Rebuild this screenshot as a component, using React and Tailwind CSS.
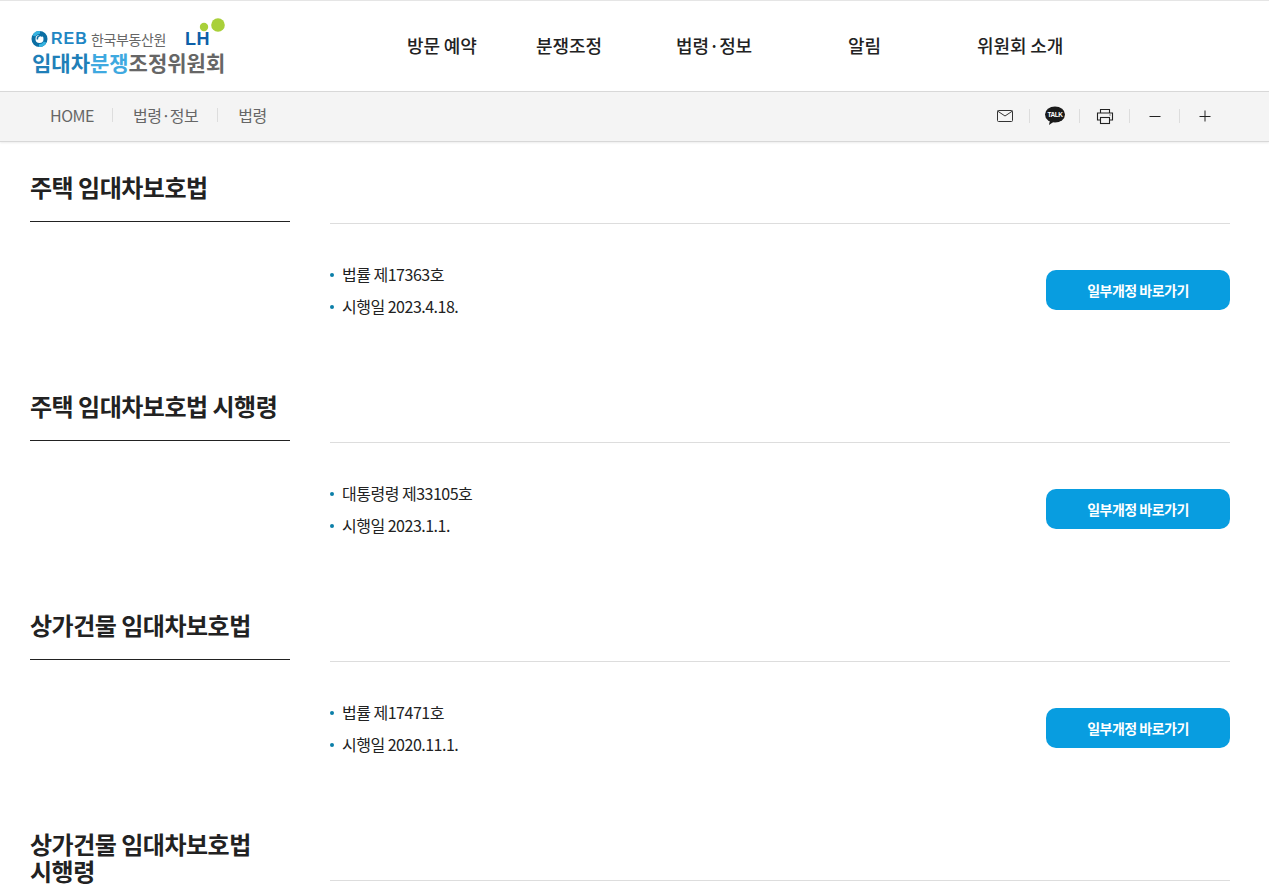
const FONT = "font-['Noto_Sans_CJK_KR','Noto_Sans',sans-serif]";

function Logo() {
  return (
    <div className="relative flex flex-col w-[194px] ml-[2px] mt-[13px]">
      <div className="flex items-center h-[18px] gap-[3px] -ml-[1px]">
        <svg width="17" height="18" viewBox="0 0 17 18" className="shrink-0">
          <circle cx="8.5" cy="9" r="6" fill="none" stroke="#0b6fa4" strokeWidth="4" />
          <path d="M3 6a6 6 0 0 1 6-3.5" fill="none" stroke="#35b3e0" strokeWidth="3" />
          <path d="M14 12a6 6 0 0 1-6 3.5" fill="none" stroke="#35b3e0" strokeWidth="3" />
          <path d="M6.5 9.5a3 3 0 0 1 5-3" fill="none" stroke="#0b6fa4" strokeWidth="1.5" />
        </svg>
        <span className="w-[37px] text-[16px] font-bold leading-[18px] tracking-[1px] text-[#1f87c4] font-['Liberation_Sans',sans-serif]">REB</span>
        <span className="text-[14px] leading-[18px] tracking-[-0.4px] text-[#666]">한국부동산원</span>
        <span className="ml-[16px] text-[18px] font-bold leading-[18px] tracking-[0.5px] text-[#0d5fa8] font-['Liberation_Sans',sans-serif]">LH</span>
      </div>
      <svg width="28" height="16" viewBox="0 0 28 16" className="absolute left-[166px] -top-[12px]">
        <circle cx="6" cy="9" r="4.2" fill="#a9d03a" />
        <circle cx="20" cy="7" r="6.8" fill="#a9d03a" />
      </svg>
      <div className="text-[21px] font-bold leading-[28px] whitespace-nowrap text-[#1f7fb8]">임대차<span className="text-[#3fa9e0]">분쟁</span><span className="text-[#666]">조정위원회</span></div>
    </div>
  );
}

function Section({ title, lines }) {
  return (
    <section className="flex gap-10 h-[219px]">
      <div className="w-[260px] shrink-0">
        <h2 className="text-[24px] font-bold tracking-[-0.5px] leading-[27px] text-[#222] pt-[31px] pb-[21px] border-b border-[#222] break-keep">{title}</h2>
      </div>
      <div className="flex-1 mt-[81px] border-t border-[#ddd] flex justify-between pt-[34px]">
        <ul className="text-[16px] text-[#222] tracking-[-0.5px]">
          {lines.map((l) => (
            <li key={l} className="h-[32px] flex items-center gap-2"><span className="w-1 h-1 mt-[1px] rounded-full bg-[#0b7fa8]" />{l}</li>
          ))}
        </ul>
        {lines.length > 0 && (
          <button className="w-[184px] h-[40px] mt-[12px] rounded-[10px] bg-[#089de0] text-white font-bold text-[14px] tracking-[-0.5px]">일부개정 바로가기</button>
        )}
      </div>
    </section>
  );
}

function Tool({ children, last }) {
  return (
    <div className={`w-[50px] h-[14px] flex items-center justify-center ${last ? "" : "border-r border-[#ddd]"}`}>{children}</div>
  );
}

export default function App() {
  return (
    <div className={`${FONT} h-[891px] overflow-hidden bg-white border-t border-[#e5e5e5]`}>
      <header className="h-[90px] flex items-center px-[30px]">
        <Logo />
        <nav className="flex ml-[181px] -mt-[2px] text-[18px] font-medium text-[#222] tracking-[-0.1px]">
          <a className="w-[129px]">방문 예약</a>
          <a className="w-[140px]">분쟁조정</a>
          <a className="w-[172px]">법령·정보</a>
          <a className="w-[129px]">알림</a>
          <a>위원회 소개</a>
        </nav>
      </header>
      <div className="h-[51px] bg-[#f4f4f4] border-y border-[#d8d8d8] shadow-[0_1px_2px_rgba(0,0,0,0.08)] flex items-center justify-between pl-[50px] pr-[39px] text-[16px] text-[#666] tracking-[-0.5px]">
        <div className="flex items-center gap-5 -mt-[3px]">
          <span className="-mr-[2px]">HOME</span>
          <span className="w-px h-[14px] bg-[#ddd]" />
          <span className="-mr-[1px]">법령·정보</span>
          <span className="w-px h-[14px] bg-[#ddd]" />
          <span>법령</span>
        </div>
        <div className="flex items-center -mt-[1px]">
          <Tool>
            <svg width="18" height="14" viewBox="0 0 18 14" fill="none" stroke="#333" strokeWidth="1"><rect x="1.5" y="1.5" width="15" height="11" rx="1" /><path d="M1.5 2l7.5 5 7.5-5" /></svg>
          </Tool>
          <Tool>
            <svg width="22" height="20" viewBox="0 0 22 20"><ellipse cx="11" cy="8.5" rx="10" ry="8" fill="#1a1a1a" /><path d="M6 14l-1 5 5-3.5z" fill="#1a1a1a" /><text x="11" y="11" textAnchor="middle" fontSize="6.5" fontWeight="700" fill="#fff" fontFamily="Liberation Sans, sans-serif">TALK</text></svg>
          </Tool>
          <Tool>
            <svg width="18" height="17" viewBox="0 0 18 17" fill="none" stroke="#222" strokeWidth="1.1"><path d="M4.5 5V1.5h9V5" /><path d="M4.5 12H1.5V5h15v7h-3" /><rect x="4.5" y="9.5" width="9" height="6" /><path d="M13.5 7h1" /></svg>
          </Tool>
          <Tool>
            <svg width="12" height="12" viewBox="0 0 12 12" stroke="#222" strokeWidth="1"><path d="M0.5 6.5h11" /></svg>
          </Tool>
          <Tool last>
            <svg width="12" height="12" viewBox="0 0 12 12" stroke="#222" strokeWidth="1"><path d="M0.5 6.5h11M6 0.5v11" /></svg>
          </Tool>
        </div>
      </div>
      <main className="pl-[30px] pr-[39px]">
        <Section title="주택 임대차보호법" lines={["법률 제17363호", "시행일 2023.4.18."]} />
        <Section title="주택 임대차보호법 시행령" lines={["대통령령 제33105호", "시행일 2023.1.1."]} />
        <Section title="상가건물 임대차보호법" lines={["법률 제17471호", "시행일 2020.11.1."]} />
        <Section title="상가건물 임대차보호법 시행령" lines={[]} />
      </main>
    </div>
  );
}
